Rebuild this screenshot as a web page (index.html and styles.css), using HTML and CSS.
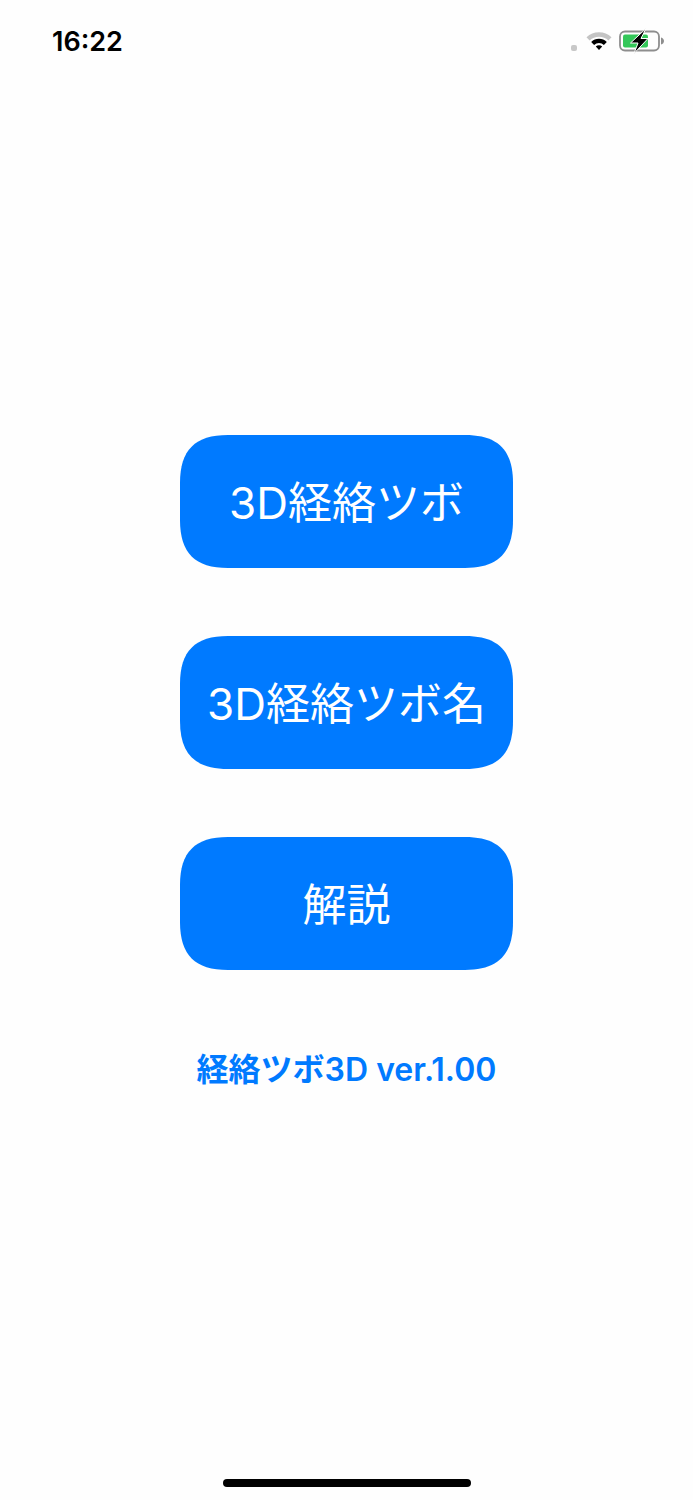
FILE: index.html
```html
<!DOCTYPE html>
<html lang="ja">
<head>
    <meta charset="UTF-8">
    <meta name="viewport" content="width=device-width, initial-scale=1.0">
    <title>経絡ツボ3D</title>
    <link rel="stylesheet" href="styles.css">
</head>
<body>
    <div class="screen">
        <div class="status-bar">
            <div class="time">16:22</div>
            <div class="status-icons">
                <div class="dot"></div>
                <svg class="wifi" width="28" height="22" viewBox="0 0 28 22">
                    <path d="M1.5 8.2 A18 18 0 0 1 26.5 8.2 L23.4 11.4 A13.6 13.6 0 0 0 4.6 11.4 Z" fill="#c4c4c4"/>
                    <path d="M6.2 13 A11.2 11.2 0 0 1 21.8 13 L18.9 16 A7 7 0 0 0 9.1 16 Z" fill="#000"/>
                    <path d="M10.8 17.6 A4.6 4.6 0 0 1 17.2 17.6 L14 21 Z" fill="#000"/>
                </svg>
                <svg class="battery" width="46" height="26" viewBox="0 0 46 26">
                    <rect x="1" y="3.5" width="39" height="19" rx="5" fill="none" stroke="#8e8e8e" stroke-width="1.8"/>
                    <rect x="4" y="6.5" width="25" height="13" rx="2" fill="#34c759"/>
                    <path d="M42 9.5 C44 10 45 11.5 45 13 C45 14.5 44 16 42 16.5 Z" fill="#8e8e8e"/>
                    <path d="M27 0.5 L11.5 15 H19 L15 25.5 L29 10.5 H22 Z" fill="#000" stroke="#fff" stroke-width="1"/>
                </svg>
            </div>
        </div>
        <div class="menu">
            <a class="menu-button">3D経絡ツボ</a>
            <a class="menu-button">3D経絡ツボ名</a>
            <a class="menu-button">解説</a>
            <div class="version">経絡ツボ3D ver.1.00</div>
        </div>
        <div class="home-bar"></div>
    </div>
</body>
</html>
```

FILE: styles.css
```css
*{
    padding: 0;
    margin: 0;
    box-sizing: border-box;
    font-family: Inter, "Noto Sans CJK JP", sans-serif;
}
body{
    background-color: #fefefe;
}
.screen{
    height: 1500px;
    display: flex;
    flex-direction: column;
    overflow: hidden;
}
.status-bar{
    height: 82px;
    display: flex;
    justify-content: space-between;
    align-items: center;
    padding: 0 28px 0 52px;
}
.time{
    font-size: 27px;
    font-weight: 600;
    color: #000;
}
.status-icons{
    display: flex;
    align-items: center;
    gap: 6px;
}
.dot{
    width: 6px;
    height: 6px;
    margin-top: 13px;
    margin-right: 2px;
    border-radius: 2px;
    background-color: #c8c8c8;
}
.wifi{
    margin-top: -2px;
}
.menu{
    flex: 1;
    display: flex;
    flex-direction: column;
    align-items: center;
    gap: 68px;
    padding-top: 353px;
}
.menu-button{
    width: 333px;
    height: 133px;
    padding-bottom: 4px;
    clip-path: path("M48 0H285C318 0 333 15 333 48V85C333 118 318 133 285 133H48C15 133 0 118 0 85V48C0 15 15 0 48 0Z");
    background-color: #007aff;
    color: #fff;
    font-size: 44px;
    display: flex;
    justify-content: center;
    align-items: center;
}
.version{
    margin-top: 6px;
    font-size: 32px;
    font-weight: 600;
    color: #007aff;
}
.home-bar{
    width: 248px;
    height: 8px;
    margin: 0 auto 13px;
    border-radius: 4px;
    background-color: #000;
}
```
